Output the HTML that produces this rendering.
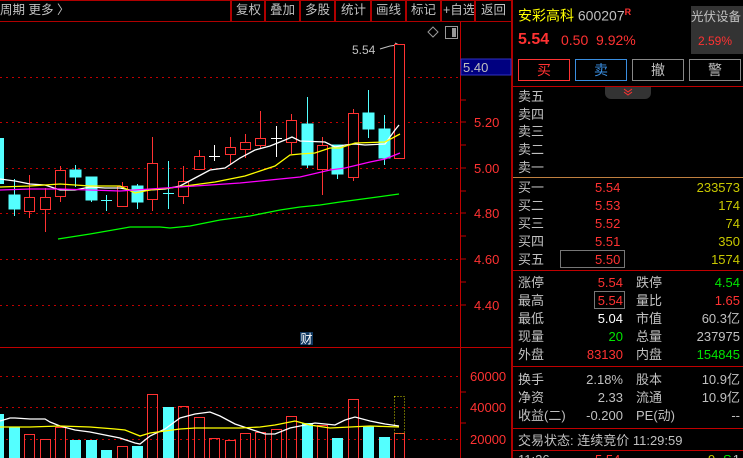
<!DOCTYPE html>
<html><head><meta charset="utf-8"><style>
*{margin:0;padding:0;box-sizing:border-box}
html{width:743px;height:458px;overflow:hidden;background:#000}
body{width:743px;height:458px;background:#000;overflow:hidden;position:relative;font-family:"Liberation Sans","Noto Sans CJK SC",sans-serif;color:#c0c0c0;font-size:13px}
.a{position:absolute;white-space:nowrap;line-height:1}
.r{color:#ff3232}.g{color:#00e600}.y{color:#c8c800}.w{color:#fff}
.tb{position:absolute;top:4px;font-size:12.5px;color:#c0c0c0;line-height:1}
.sep{position:absolute;top:1px;width:2px;height:20px;background:#b00000}
.btn{position:absolute;top:59px;height:22px;width:52px;border:1px solid #888;text-align:center;line-height:20px;font-size:14px}
.row{position:absolute;left:518px;width:222px;height:14px;font-size:13px;line-height:13px;white-space:nowrap}
.row span{position:absolute;top:0}
</style></head><body>
<div style="position:absolute;left:0;top:0;width:512px;height:1px;background:#b00000"></div>
<div style="position:absolute;left:0;top:21px;width:512px;height:1px;background:#b00000"></div>
<div class="tb" style="left:0">周期 更多 〉</div>
<div class="sep" style="left:230px"></div>
<div class="tb" style="left:236px">复权</div><div class="sep" style="left:264px"></div>
<div class="tb" style="left:270px">叠加</div><div class="sep" style="left:299px"></div>
<div class="tb" style="left:305px">多股</div><div class="sep" style="left:334px"></div>
<div class="tb" style="left:341px">统计</div><div class="sep" style="left:370px"></div>
<div class="tb" style="left:376px">画线</div><div class="sep" style="left:405px"></div>
<div class="tb" style="left:411px">标记</div><div class="sep" style="left:440px"></div>
<div class="tb" style="left:443px">+自选</div><div class="sep" style="left:474px"></div>
<div class="tb" style="left:481px">返回</div>
<div style="position:absolute;left:511px;top:0;width:2px;height:458px;background:#b00000"></div>

<svg width="512" height="458" style="position:absolute;left:0;top:0" xmlns="http://www.w3.org/2000/svg">
<g stroke="#c00000" stroke-dasharray="2,4" stroke-width="1">
<line x1="0" y1="77.5" x2="460" y2="77.5"/><line x1="0" y1="122.5" x2="460" y2="122.5"/><line x1="0" y1="168.5" x2="460" y2="168.5"/><line x1="0" y1="213.5" x2="460" y2="213.5"/><line x1="0" y1="259.5" x2="460" y2="259.5"/><line x1="0" y1="305.5" x2="460" y2="305.5"/>
<line x1="0" y1="376.5" x2="460" y2="376.5"/><line x1="0" y1="407.5" x2="460" y2="407.5"/><line x1="0" y1="439.5" x2="460" y2="439.5"/>
</g>
<line x1="460.5" y1="22" x2="460.5" y2="458" stroke="#c00000"/>
<line x1="0" y1="347.5" x2="512" y2="347.5" stroke="#c00000"/>
<g stroke="#c00000"><line x1="461" y1="100" x2="466" y2="100"/><line x1="461" y1="145" x2="466" y2="145"/><line x1="461" y1="191" x2="466" y2="191"/><line x1="461" y1="236" x2="466" y2="236"/><line x1="461" y1="282" x2="466" y2="282"/><line x1="461" y1="122" x2="466" y2="122"/><line x1="461" y1="168" x2="466" y2="168"/><line x1="461" y1="213" x2="466" y2="213"/><line x1="461" y1="259" x2="466" y2="259"/><line x1="461" y1="305" x2="466" y2="305"/><line x1="461" y1="392" x2="466" y2="392"/><line x1="461" y1="423" x2="466" y2="423"/></g>
<g fill="#ff3232" font-family="Liberation Sans" font-size="13">
<text x="474" y="127">5.20</text><text x="474" y="173">5.00</text><text x="474" y="218">4.80</text><text x="474" y="264">4.60</text><text x="474" y="310">4.40</text>
<text x="470" y="381">60000</text><text x="470" y="412">40000</text><text x="470" y="444">20000</text></g>
<rect x="461" y="59" width="50" height="16" fill="#000080" stroke="#3030c0"/>
<text x="463" y="72" fill="#c0c0c0" font-family="Liberation Sans" font-size="13">5.40</text>
<path d="M433 27 L438 32 L433 37 L428 32Z" fill="none" stroke="#999"/>
<rect x="445.5" y="26.5" width="12" height="12" fill="none" stroke="#999"/><rect x="452" y="28" width="4" height="9" fill="#999"/>
<text x="352" y="54" fill="#c0c0c0" font-family="Liberation Sans" font-size="12">5.54</text>
<path d="M380 49 L390 46 L398 45 M395 43 L399 45 L395 47" stroke="#c0c0c0" fill="none"/>
<g stroke-width="1" shape-rendering="crispEdges">
<rect x="-2" y="138" width="6" height="46" fill="#54ffff"/>
<g stroke="#54ffff" fill="#54ffff">
<line x1="14.5" y1="179" x2="14.5" y2="216"/><rect x="9" y="195" width="11" height="14"/>
<line x1="75.5" y1="165" x2="75.5" y2="187"/><rect x="70" y="170" width="11" height="7"/>
<line x1="91.5" y1="177" x2="91.5" y2="202"/><rect x="86" y="177" width="11" height="23"/>
<line x1="106.5" y1="195" x2="106.5" y2="211"/><line x1="101" y1="200.5" x2="112" y2="200.5"/>
<line x1="137.5" y1="184" x2="137.5" y2="209"/><rect x="132" y="186" width="11" height="16"/>
<line x1="168.5" y1="161" x2="168.5" y2="209"/><line x1="163" y1="193.5" x2="174" y2="193.5"/>
<line x1="307.5" y1="97" x2="307.5" y2="168"/><rect x="302" y="124" width="11" height="41"/>
<line x1="337.5" y1="145" x2="337.5" y2="179"/><rect x="332" y="145" width="11" height="29"/>
<line x1="368.5" y1="90" x2="368.5" y2="138"/><rect x="363" y="113" width="11" height="16"/>
<line x1="384.5" y1="115" x2="384.5" y2="165"/><rect x="379" y="129" width="11" height="29"/>
</g>
<g stroke="#fff"><line x1="214.5" y1="145" x2="214.5" y2="161"/><line x1="209" y1="156.5" x2="220" y2="156.5"/>
<line x1="276.5" y1="126" x2="276.5" y2="157"/><line x1="271" y1="138.5" x2="282" y2="138.5"/></g>
<g stroke="#ff3232" fill="#000">
<line x1="29.5" y1="175" x2="29.5" y2="218"/><rect x="24.5" y="197.5" width="10" height="14"/>
<line x1="45.5" y1="188" x2="45.5" y2="232"/><rect x="40.5" y="197.5" width="10" height="12"/>
<line x1="60.5" y1="166" x2="60.5" y2="202"/><rect x="55.5" y="170.5" width="10" height="26"/>
<line x1="122.5" y1="182" x2="122.5" y2="207"/><rect x="117.5" y="186.5" width="10" height="20"/>
<line x1="152.5" y1="137" x2="152.5" y2="211"/><rect x="147.5" y="163.5" width="10" height="36"/>
<line x1="183.5" y1="166" x2="183.5" y2="204"/><rect x="178.5" y="181.5" width="10" height="15"/>
<line x1="199.5" y1="150" x2="199.5" y2="170"/><rect x="194.5" y="156.5" width="10" height="13"/>
<line x1="230.5" y1="137" x2="230.5" y2="164"/><rect x="225.5" y="147.5" width="10" height="7"/>
<line x1="245.5" y1="134" x2="245.5" y2="158"/><rect x="240.5" y="142.5" width="10" height="7"/>
<line x1="260.5" y1="111" x2="260.5" y2="148"/><rect x="255.5" y="138.5" width="10" height="7"/>
<line x1="291.5" y1="114" x2="291.5" y2="154"/><rect x="286.5" y="120.5" width="10" height="22"/>
<line x1="322.5" y1="137" x2="322.5" y2="195"/><rect x="317.5" y="145.5" width="10" height="24"/>
<line x1="353.5" y1="109" x2="353.5" y2="181"/><rect x="348.5" y="113.5" width="10" height="64"/>
<rect x="394.5" y="44.5" width="10" height="114"/>
</g>
</g>
<g fill="none" stroke-width="1.3">
<polyline stroke="#fff" points="0,179 15,181 30,184 45,185 60,190 75,190 90,187 105,188 120,188 130,190 150,190 165,189 180,186 195,178 210,170 225,168 240,158 255,150 270,146 285,140 292,137 300,141 325,142 335,147 345,145 355,144 365,145 385,144 395,130 399,125"/>
<polyline stroke="#ffff00" points="0,187 30,186 60,184 90,186 120,186 135,193 150,190 170,188 185,186 200,184 215,182 230,179 245,176 260,171 275,166 290,155 300,154 315,153 330,148 340,148 355,143 385,142 400,134"/>
<polyline stroke="#ff00ff" points="0,190 30,189 60,189 90,190 120,191 150,189 180,187 210,185 240,183 270,180 300,177 330,170 345,168 370,162 385,159 400,153"/>
<polyline stroke="#00ff00" points="58,239 90,234 130,227 160,227 170,228 190,226 220,220 250,216 280,210 300,207 320,205 340,202 370,198 399,194"/>
</g>
<rect x="300" y="332" width="13" height="13" fill="#103860"/>
<text x="300.5" y="343" fill="#fff" font-size="12" font-family="Noto Sans CJK SC">财</text>
<g shape-rendering="crispEdges">
<g fill="#54ffff">
<rect x="-2" y="414" width="6" height="44"/><rect x="9" y="427" width="11" height="31"/><rect x="70" y="440" width="11" height="18"/><rect x="86" y="440" width="11" height="18"/><rect x="101" y="450" width="11" height="8"/><rect x="132" y="446" width="11" height="12"/><rect x="163" y="407" width="11" height="51"/><rect x="302" y="423" width="11" height="35"/><rect x="332" y="438" width="11" height="20"/><rect x="363" y="426" width="11" height="32"/><rect x="379" y="437" width="11" height="21"/>
</g>
<g fill="none" stroke="#ff3232">
<rect x="24.5" y="434.5" width="10" height="30"/><rect x="40.5" y="439.5" width="10" height="30"/><rect x="55.5" y="427.5" width="10" height="40"/><rect x="117.5" y="446.5" width="10" height="30"/><rect x="147.5" y="394.5" width="10" height="70"/><rect x="178.5" y="406.5" width="10" height="60"/><rect x="194.5" y="417.5" width="10" height="50"/><rect x="209.5" y="438.5" width="10" height="30"/><rect x="225.5" y="440.5" width="10" height="30"/><rect x="240.5" y="433.5" width="10" height="30"/><rect x="255.5" y="432.5" width="10" height="30"/><rect x="271.5" y="429.5" width="10" height="30"/><rect x="286.5" y="416.5" width="10" height="50"/><rect x="317.5" y="425.5" width="10" height="40"/><rect x="348.5" y="399.5" width="10" height="70"/><rect x="394.5" y="433.5" width="10" height="30"/>
</g>
<rect x="394.5" y="396.5" width="10" height="37" fill="none" stroke="#c8c800" stroke-dasharray="1,2"/>
</g>
<g fill="none" stroke-width="1.3">
<polyline stroke="#fff" points="0,421 10,418 15,418 30,419 45,419 50,422 60,426 75,430 90,432 105,435 120,438 135,443 140,444 150,436 165,429 180,418 195,414 210,412 220,416 235,424 250,429 265,434 275,434 290,428 305,425 315,423 335,425 345,420 355,417 370,421 385,424 399,426"/>
<polyline stroke="#ffff00" points="0,427 30,427 60,426 90,427 115,429 125,430 140,436 150,433 165,431 180,429 195,428 240,428 260,427 275,425 295,421 310,425 330,428 350,427 370,426 399,427"/>
</g>
</svg>

<div class="a" style="left:518px;top:8px;font-size:14px"><span style="color:#ffff00">安彩高科</span> <span>600207</span><sup class="r" style="font-size:9px;font-weight:bold">R</sup></div>
<div style="position:absolute;left:691px;top:6px;width:52px;height:48px;background:#333"></div>
<div class="a" style="left:691px;top:11px;font-size:12.5px">光伏设备</div>
<div class="a r" style="left:698px;top:35px;font-size:12px">2.59%</div>
<div class="a r" style="left:518px;top:32px;font-size:16px;font-weight:bold">5.54</div>
<div class="a r" style="left:561px;top:33px;font-size:14px">0.50&nbsp; 9.92%</div>
<div class="btn r" style="left:518px;border-color:#ff3232">买</div>
<div class="btn" style="left:575px;border-color:#3a8ee0;color:#3a8ee0">卖</div>
<div class="btn" style="left:632px">撤</div>
<div class="btn" style="left:689px">警</div>
<div style="position:absolute;left:513px;top:86px;width:230px;height:1px;background:#c00000"></div>
<div style="position:absolute;left:605px;top:87px;width:46px;height:12px;background:#333;border-radius:0 0 6px 6px"></div>
<svg width="10" height="8" style="position:absolute;left:623px;top:88px"><path d="M1 1 L5 4 L9 1 M1 4 L5 7 L9 4" stroke="#ff3232" fill="none"/></svg>

<div class="row" style="top:90px">卖五</div>
<div class="row" style="top:108px">卖四</div>
<div class="row" style="top:125px">卖三</div>
<div class="row" style="top:143px">卖二</div>
<div class="row" style="top:161px">卖一</div>
<div style="position:absolute;left:513px;top:177px;width:230px;height:1px;background:#c08040"></div>
<div class="row" style="top:181px"><span>买一</span><span class="r" style="left:77px">5.54</span><span class="y" style="right:0">233573</span></div>
<div class="row" style="top:199px"><span>买二</span><span class="r" style="left:77px">5.53</span><span class="y" style="right:0">174</span></div>
<div class="row" style="top:217px"><span>买三</span><span class="r" style="left:77px">5.52</span><span class="y" style="right:0">74</span></div>
<div class="row" style="top:235px"><span>买四</span><span class="r" style="left:77px">5.51</span><span class="y" style="right:0">350</span></div>
<div class="row" style="top:253px"><span>买五</span><span class="r" style="left:77px">5.50</span><span class="y" style="right:0">1574</span></div>
<div style="position:absolute;left:560px;top:250px;width:65px;height:18px;border:1px solid #777"></div>
<div style="position:absolute;left:513px;top:270px;width:230px;height:1px;background:#c00000"></div>
<div class="row" style="top:276px"><span>涨停</span><span class="r" style="right:117px">5.54</span><span style="left:118px">跌停</span><span class="g" style="right:0">4.54</span></div>
<div class="row" style="top:294px"><span>最高</span><span class="r" style="right:117px">5.54</span><span style="left:118px">量比</span><span class="r" style="right:0">1.65</span></div>
<div style="position:absolute;left:594px;top:291px;width:31px;height:18px;border:1px solid #777"></div>
<div class="row" style="top:312px"><span>最低</span><span class="w" style="right:117px">5.04</span><span style="left:118px">市值</span><span style="right:0">60.3亿</span></div>
<div class="row" style="top:330px"><span>现量</span><span class="g" style="right:117px">20</span><span style="left:118px">总量</span><span style="right:0">237975</span></div>
<div class="row" style="top:348px"><span>外盘</span><span class="r" style="right:117px">83130</span><span style="left:118px">内盘</span><span class="g" style="right:0">154845</span></div>
<div style="position:absolute;left:513px;top:366px;width:230px;height:1px;background:#c00000"></div>
<div class="row" style="top:373px"><span>换手</span><span style="right:117px">2.18%</span><span style="left:118px">股本</span><span style="right:0">10.9亿</span></div>
<div class="row" style="top:391px"><span>净资</span><span style="right:117px">2.33</span><span style="left:118px">流通</span><span style="right:0">10.9亿</span></div>
<div class="row" style="top:409px"><span>收益(二)</span><span style="right:117px">-0.200</span><span style="left:118px">PE(动)</span><span style="right:0">--</span></div>
<div style="position:absolute;left:513px;top:428px;width:230px;height:1px;background:#c00000"></div>
<div class="row" style="top:434px">交易状态: 连续竞价 11:29:59</div>
<div style="position:absolute;left:513px;top:450px;width:230px;height:1px;background:#c00000"></div>
<div class="row" style="top:453px"><span>11:26</span><span class="r" style="left:77px">5.54</span><span class="y" style="left:190px">9</span><span class="g" style="left:205px">S</span><span style="right:0">1</span></div>
</body></html>
